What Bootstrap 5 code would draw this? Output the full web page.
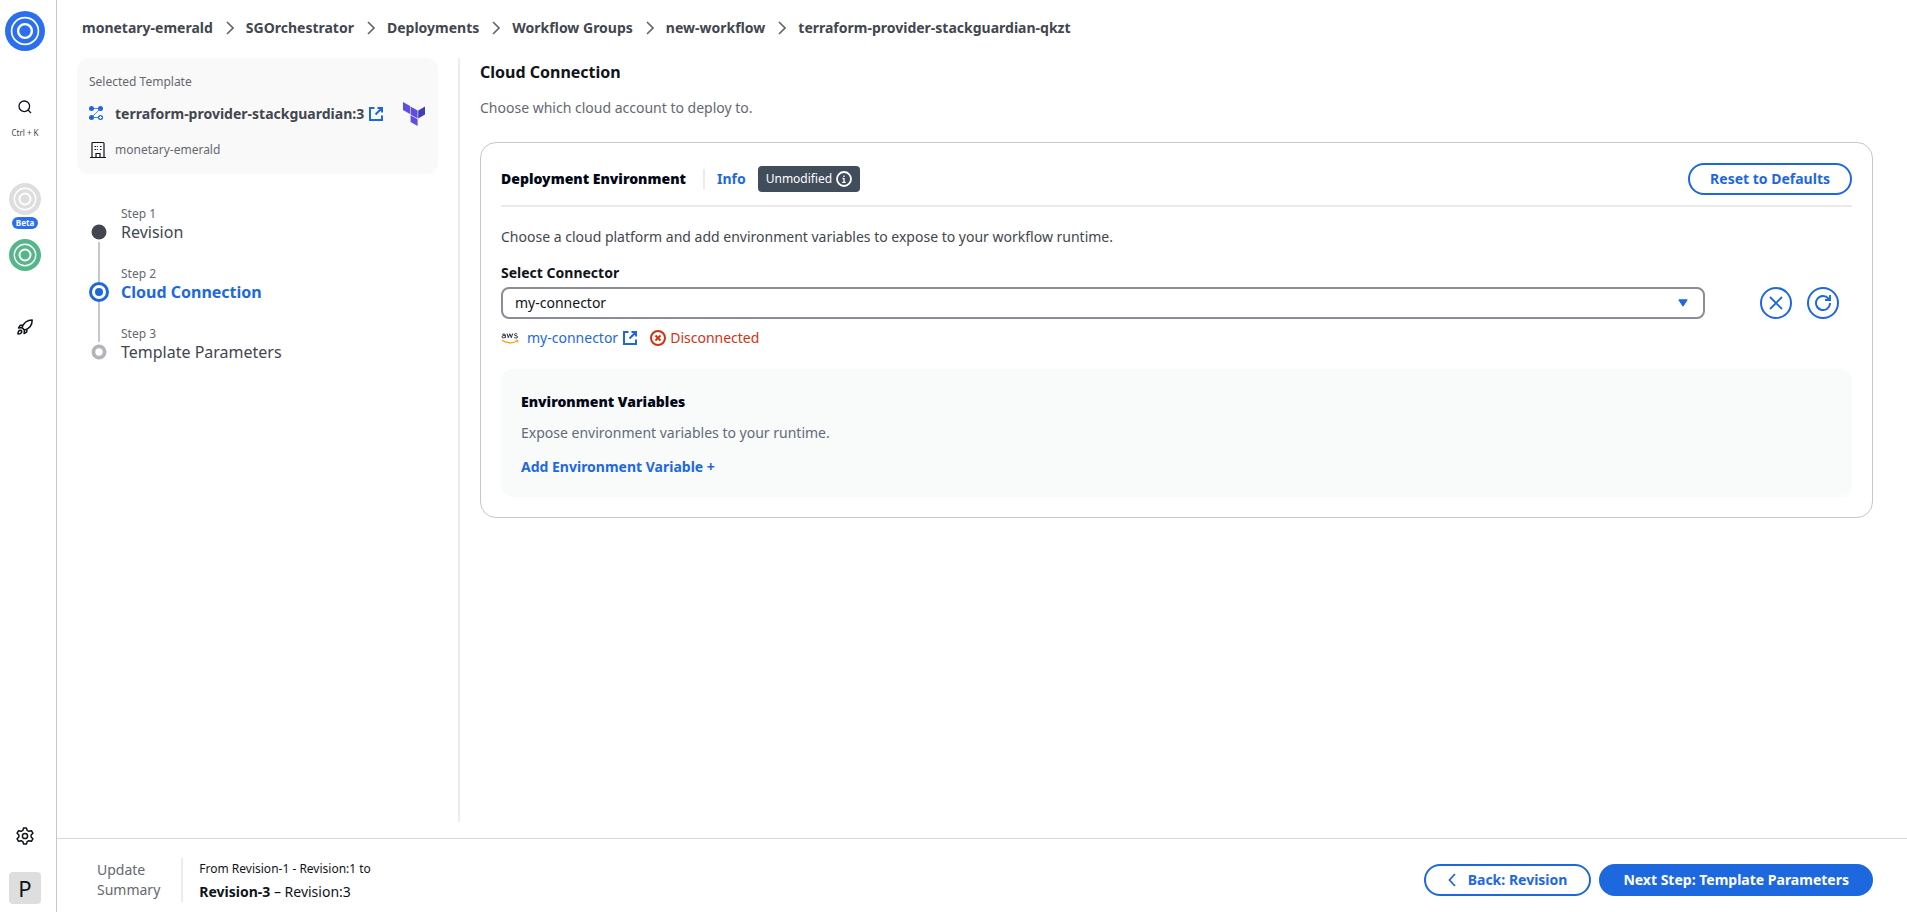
<!DOCTYPE html>
<html lang="en">
<head>
<meta charset="utf-8">
<meta name="viewport" content="width=device-width, initial-scale=1">
<title>Cloud Connection</title>
<link href="https://cdn.jsdelivr.net/npm/bootstrap@5.3.0/dist/css/bootstrap.min.css" rel="stylesheet">
<style>
  :root { --sg-blue: #1e68df; --sg-text: #424650; --sg-muted: #656871; --sg-line: #ebebf0; --sg-border: #c6c6cd; }
  body { font-family: "Noto Sans", "Open Sans", sans-serif; font-size: 14px; line-height: 20px; color: #0f141a; }
  a { color: var(--sg-blue); text-decoration: none; }
  svg { display: block; flex: none; }
  .rail { width: 57px; padding: 11px 6px 8px 0; border-right: 1px solid var(--sg-border); }
  .rail button, .rail a { border: 0; padding: 0; background: none; color: #0f141a; }
  .rail .find { gap: 13px; margin: 49px 0 44px; }
  .rail .keys { font-size: 8px; line-height: 12px; color: var(--sg-text); }
  .beta { font-size: 8px; line-height: 12px; font-weight: 700; color: #fff; background: #2b6fee; padding: 0 4px; margin: 2px 0 10px; }
  .rail .avatar { width: 32px; height: 32px; border-radius: 4px; background: #dedede; font-size: 22px; line-height: 32px; margin-top: 27px; }
  .crumbs { padding: 18px 25px 20px; font-weight: 700; }
  .crumbs a, .crumbs span { color: var(--sg-text); }
  .crumbs .breadcrumb-item + .breadcrumb-item { padding-left: 0; }
  .crumbs .breadcrumb-item + .breadcrumb-item::before { display: none; }
  .crumbs svg { margin: 0 12px 0 13px; }
  .aside { width: 363px; margin-left: 20px; }
  .template { background: #f9f9f9; border-radius: 12px; padding: 15px 13px 15px 12px; margin-right: 2px; }
  .template-name { margin: 11px 0 15px; }
  .fs12 { font-size: 12px; line-height: 18px; color: var(--sg-muted); }
  .steps { margin: 31px 0 0 12px; }
  .steps li { height: 60px; }
  .steps .marker { width: 20px; padding-top: 17px; margin-right: 12px; }
  .steps .stem { width: 2px; flex: 1 0 0; margin: 0 0 -17px; background: var(--sg-border); }
  .steps .step-name { font-size: 16px; line-height: 18px; color: var(--sg-text); }
  .steps .ring { width: 20px; height: 20px; }
  .divide { width: 2px; margin: 0 20px 0 18px; background: var(--sg-line); }
  .main-col { padding-right: 34px; }
  h1 { font-size: 16px; line-height: 24px; font-weight: 700; margin: 2px 0 14px; }
  .panel { border: 1px solid var(--sg-border); border-radius: 16px; padding: 20px; margin-top: 24px; }
  .panel-head { padding-bottom: 10px; border-bottom: 2px solid #ebebeb; margin-bottom: 20px; }
  h2 { font-size: 14px; line-height: 20px; font-weight: 900; color: #000716; margin: 0; }
  .bar { width: 2px; height: 20px; background: #ebebeb; margin: 0 12px 0 17px; }
  .status { background: #424d5c; color: #fff; border-radius: 4px; height: 26px; padding: 0 8px; font-size: 12px; margin-left: 12px; }
  .pill { height: 32px; border: 2px solid var(--sg-blue); border-radius: 20px; color: var(--sg-blue); font-size: 14px; line-height: 20px; font-weight: 700; padding: 4px 20px; }
  .pill:hover { background: #f0f6ff; color: var(--sg-blue); border-color: var(--sg-blue); }
  .foot .pill { padding: 4px 22px; }
  .pill-main, .pill-main:hover { background: var(--sg-blue); color: #fff; }
  .pill svg { margin-right: 12px; }
  .round { width: 32px; height: 32px; border: 2px solid var(--sg-blue); border-radius: 50%; color: var(--sg-blue); padding: 0; }
  .connector { height: 32px; border: 2px solid #8c8c94; border-radius: 8px; padding: 0 36px 0 12px; font-size: 14px; line-height: 20px; color: #0f141a; background-size: 10px 8px; background-position: right 15px center;
    background-image: url("data:image/svg+xml,%3Csvg xmlns='http://www.w3.org/2000/svg' viewBox='0 0 10 8'%3E%3Cpath d='M.8.8h8.4L5 7.2z' fill='%231e68df' stroke='%231e68df' stroke-linejoin='round'/%3E%3C/svg%3E"); }
  .actions { gap: 15px; margin: 0 13px 0 55px; }
  .state-row { margin: 9px 0 21px; }
  .danger-text { color: #d13212; }
  .vars { background: #f9fafa; border-radius: 12px; padding: 23px 20px 20px; }
  .vars p { margin: 11px 0 14px; color: #5f6b7a; }
  .vars .btn { display: block; color: var(--sg-blue); font-size: 14px; line-height: 20px; }
  .foot { border-top: 1px solid #d5d9d9; padding: 18px 34px 10px 40px; }
  .foot .bar { height: 44px; background: var(--sg-line); margin: 0 16px 0 21px; }
  .foot .change { padding-top: 3px; }
</style>
</head>
<body class="d-flex min-vh-100">

<svg width="0" height="0" class="position-absolute" aria-hidden="true">
  <defs>
    <symbol id="target" viewBox="0 0 40 40"><circle cx="20" cy="20" r="20" fill="currentColor"/><g fill="none" stroke="#fff" stroke-width="1.7"><circle cx="20" cy="20" r="13.4"/><circle cx="20" cy="20" r="6.9" stroke-width="2.4"/></g></symbol>
    <symbol id="chev" viewBox="0 0 8 14"><path d="M1 1l6 6-6 6" fill="none" stroke="#656871" stroke-width="1.700"/></symbol>
    <symbol id="ext" viewBox="0 0 16 16"><path d="M6.500 2H2v12h12V9.500M9.500 2H14v4.500M7.500 8.500 14 2" fill="none" stroke="#1e68df" stroke-width="2"/></symbol>
  </defs>
</svg>

<nav class="rail d-flex flex-column align-items-center flex-shrink-0" aria-label="Product">
  <a href="#" aria-label="Home" style="color:#2b6fee"><svg width="40" height="40"><use href="#target"/></svg></a>
  <button type="button" class="find d-flex flex-column align-items-center" aria-label="Search">
    <svg width="14" height="14" viewBox="0 0 14 14" fill="none" stroke="#0f141a" stroke-width="1.3"><circle cx="6.3" cy="6.3" r="5.300"/><path d="M10 10l3 3"/></svg>
    <span class="keys">Ctrl + K</span>
  </button>
  <a href="#" aria-label="Orchestrator" style="color:#dedede"><svg width="32" height="32"><use href="#target"/></svg></a>
  <span class="beta rounded-pill">Beta</span>
  <a href="#" aria-label="Workspace" style="color:#55b68a"><svg width="32" height="32"><use href="#target"/></svg></a>
  <a href="#" class="mt-5" aria-label="Launch"><svg width="16" height="16" viewBox="0 0 16 16" fill="none" stroke="#0f141a" stroke-width="1.5" stroke-linejoin="round"><path d="M5 8.600C6.300 4.600 9.600 1 15.200.9 15.200 6.400 11.500 9.800 7.500 11.100zM6.300 6.200 3.200 6.300 1.600 9 5 8.600M9.900 9.700 9.800 12.900 7.100 14.500 7.500 11.100"/><path d="M3.600 11.200C2 11.300.9 12.800 1 15 3.200 15.100 4.800 14 4.800 12.400 4.800 11.700 4.300 11.200 3.600 11.200z"/></svg></a>
  <a href="#" class="mt-auto" aria-label="Settings"><svg width="18" height="18" viewBox="0 0 18 18" fill="none" stroke="#0f141a" stroke-width="1.500" stroke-linejoin="round"><path d="M7.600.9h2.800l.8 2.500 1.600.9 2.600-.6 1.500 2.500-1.800 1.900v1.800l1.800 1.900-1.500 2.500-2.600-.6-1.600.9-.8 2.500H7.600l-.8-2.500-1.600-.9-2.600.6-1.500-2.500 1.800-1.900V8.100L1.100 6.200l1.500-2.500 2.600.6 1.600-.9z"/><circle cx="9" cy="9" r="2.600"/></svg></a>
  <button type="button" class="avatar" aria-label="Profile">P</button>
</nav>

<div class="d-flex flex-column flex-grow-1">
  <nav aria-label="breadcrumb">
    <ol class="breadcrumb crumbs mb-0 align-items-center">
      <li class="breadcrumb-item d-flex align-items-center"><a href="#">monetary-emerald</a><svg width="8" height="14"><use href="#chev"/></svg></li>
      <li class="breadcrumb-item d-flex align-items-center"><a href="#">SGOrchestrator</a><svg width="8" height="14"><use href="#chev"/></svg></li>
      <li class="breadcrumb-item d-flex align-items-center"><a href="#">Deployments</a><svg width="8" height="14"><use href="#chev"/></svg></li>
      <li class="breadcrumb-item d-flex align-items-center"><a href="#">Workflow Groups</a><svg width="8" height="14"><use href="#chev"/></svg></li>
      <li class="breadcrumb-item d-flex align-items-center"><a href="#">new-workflow</a><svg width="8" height="14"><use href="#chev"/></svg></li>
      <li class="breadcrumb-item" aria-current="page"><span>terraform-provider-stackguardian-qkzt</span></li>
    </ol>
  </nav>

  <div class="d-flex flex-grow-1 mb-3">
    <aside class="aside flex-shrink-0">
      <div class="template">
        <div class="fs12">Selected Template</div>
        <div class="template-name d-flex align-items-start">
          <svg width="14" height="14" viewBox="0 0 14 14" fill="#1e68df" class="mt-1"><path d="M2.500 2.500h9M11.500 2.500l-9 9h9" fill="none" stroke="#1e68df" stroke-width=".8"/><circle cx="2.500" cy="2.500" r="2.500"/><circle cx="11.500" cy="2.500" r="2.500"/><circle cx="2.500" cy="11.500" r="2.500"/><circle cx="11.500" cy="11.500" r="2.500"/><path d="M11.500 10v3M10 11.500h3" stroke="#fff"/></svg>
          <a href="#" class="fw-bold d-flex align-items-center ms-2 ps-1 text-nowrap align-self-center" style="color:#424650">terraform-provider-stackguardian:3<svg width="16" height="16" class="ms-1"><use href="#ext"/></svg></a>
          <svg width="22" height="24" viewBox="0 0 22 24" class="ms-auto" fill="#5c4ee5"><path d="M0 0l7 4v8L0 8zM7.600 4.400l7 4v8l-7-4zM7.600 13.200l7 4V24l-7-4z"/><path d="M15.200 8.400l6.800-4v8l-6.800 4z" fill="#4040b2"/></svg>
        </div>
        <div class="fs12 d-flex align-items-center">
          <svg width="18" height="18" viewBox="0 0 18 18" fill="none" stroke="#0f141a" stroke-width="1.200"><path d="M3 17V2.600Q3 1.500 4 1.500h10q1 0 1 1.100V17M1 16.500h16M7 17v-4.500h4V17M5.500 5.500h1.500M7.800 5.500h1M11 5.500h1.500M5.500 8.500h1.500M7.800 8.500h1M11 8.500h1.500"/></svg>
          <span class="ms-2">monetary-emerald</span>
        </div>
      </div>

      <ol class="steps list-unstyled mb-0">
        <li class="d-flex">
          <div class="marker d-flex flex-column align-items-center">
            <svg class="ring" viewBox="0 0 20 20"><circle cx="10" cy="10" r="7.500" fill="#424650"/></svg><span class="stem"></span>
          </div>
          <div><div class="fs12">Step 1</div><div class="step-name">Revision</div></div>
        </li>
        <li class="d-flex">
          <div class="marker d-flex flex-column align-items-center">
            <svg class="ring" viewBox="0 0 20 20"><circle cx="10" cy="10" r="8.500" fill="none" stroke="#1e68df" stroke-width="3"/><circle cx="10" cy="10" r="4" fill="#1e68df"/></svg><span class="stem"></span>
          </div>
          <div><div class="fs12">Step 2</div><a href="#" class="step-name fw-bold d-block" style="color:#1e68df" aria-current="step">Cloud Connection</a></div>
        </li>
        <li class="d-flex">
          <div class="marker d-flex flex-column align-items-center">
            <svg class="ring" viewBox="0 0 20 20"><circle cx="10" cy="10" r="5.600" fill="none" stroke="#b4b4bb" stroke-width="3.800"/></svg>
          </div>
          <div><div class="fs12">Step 3</div><div class="step-name">Template Parameters</div></div>
        </li>
      </ol>
    </aside>

    <div class="divide flex-shrink-0"></div>

    <main class="main-col flex-grow-1">
      <h1>Cloud Connection</h1>
      <p class="mb-0" style="color:#656871">Choose which cloud account to deploy to.</p>

      <section class="panel">
        <div class="panel-head d-flex align-items-center">
          <h2>Deployment Environment</h2>
          <span class="bar"></span>
          <a href="#" class="fw-bold">Info</a>
          <span class="status d-inline-flex align-items-center">Unmodified<svg width="16" height="16" viewBox="0 0 16 16" class="ms-1" fill="none" stroke="#fff" stroke-width="1.800"><circle cx="8" cy="8" r="7"/><path d="M8 11.500V7M8 6V4.500M6.500 7.500H8M6.300 11.300h3.400" stroke-width="1.300"/></svg></span>
          <button type="button" class="btn pill ms-auto">Reset to Defaults</button>
        </div>

        <p class="mb-3" style="color:#424650">Choose a cloud platform and add environment variables to expose to your workflow runtime.</p>
        <label for="connector" class="fw-bold mb-1 d-block">Select Connector</label>
        <div class="d-flex">
          <select id="connector" class="form-select connector flex-grow-1"><option>my-connector</option></select>
          <div class="actions d-flex">
            <button type="button" class="btn round d-flex align-items-center justify-content-center" aria-label="Clear"><svg width="16" height="16" viewBox="0 0 16 16" fill="none" stroke="currentColor" stroke-width="1.800"><path d="M2 2l12 12M14 2 2 14"/></svg></button>
            <button type="button" class="btn round d-flex align-items-center justify-content-center" aria-label="Refresh"><svg width="16" height="16" viewBox="0 0 16 16" fill="none" stroke="currentColor" stroke-width="1.900"><path d="M10 5h5V0M15 8a7 7 0 1 1-1.500-4.300L15 5"/></svg></button>
          </div>
        </div>
        <div class="state-row d-flex align-items-center">
          <svg width="18" height="12" viewBox="0 0 18 12" fill="none" role="img" aria-label="AWS"><path d="M1.200 2.500C2 1.900 4.300 1.500 4.300 3.100V6M4.300 3.600C2.700 3.300 1 3.600 1 4.900 1 6.300 3.500 6.200 4.300 4.900M6 1.500 7.300 5.700 8.800 1.800 10.300 5.700 11.600 1.500M16.300 2C15.300 1.500 13.400 1.500 13.400 2.700 13.400 4.200 16.600 3.300 16.600 4.900 16.600 6.300 14.500 6.200 13.200 5.500" stroke="#252f3e" stroke-width="1"/><path d="M.8 8.300Q8.500 13 15.800 9.200M14.500 8.200Q17.600 7.400 16.600 10.400" stroke="#f90" stroke-width="1.100"/></svg>
          <a href="#" class="d-flex align-items-center ms-2">my-connector<svg width="16" height="16" class="ms-1"><use href="#ext"/></svg></a>
          <span class="danger-text d-flex align-items-center ms-2 ps-1"><svg width="16" height="16" viewBox="0 0 16 16" class="me-1" fill="none" stroke="currentColor" stroke-width="2"><circle cx="8" cy="8" r="7"/><path d="M5.500 5.500l5 5M10.500 5.500l-5 5"/></svg>Disconnected</span>
        </div>

        <div class="vars">
          <h2>Environment Variables</h2>
          <p>Expose environment variables to your runtime.</p>
          <button type="button" class="btn p-0 border-0 fw-bold">Add Environment Variable +</button>
        </div>
      </section>
    </main>
  </div>

  <footer class="foot d-flex align-items-center">
    <div style="color:#656871">Update<br>Summary</div>
    <span class="bar"></span>
    <div class="change"><div class="fs12" style="color:#0f141a">From Revision-1 - Revision:1 to</div><div class="mt-1"><b>Revision-3</b> – Revision:3</div></div>
    <button type="button" class="btn pill ms-auto me-2 d-flex align-items-center"><svg width="8" height="14" viewBox="0 0 8 14" fill="none" stroke="currentColor" stroke-width="1.800"><path d="M7 1 1.500 7 7 13"/></svg>Back: Revision</button>
    <button type="button" class="btn pill pill-main">Next Step: Template Parameters</button>
  </footer>
</div>

<script src="https://cdn.jsdelivr.net/npm/bootstrap@5.3.0/dist/js/bootstrap.bundle.min.js"></script>
</body>
</html>
